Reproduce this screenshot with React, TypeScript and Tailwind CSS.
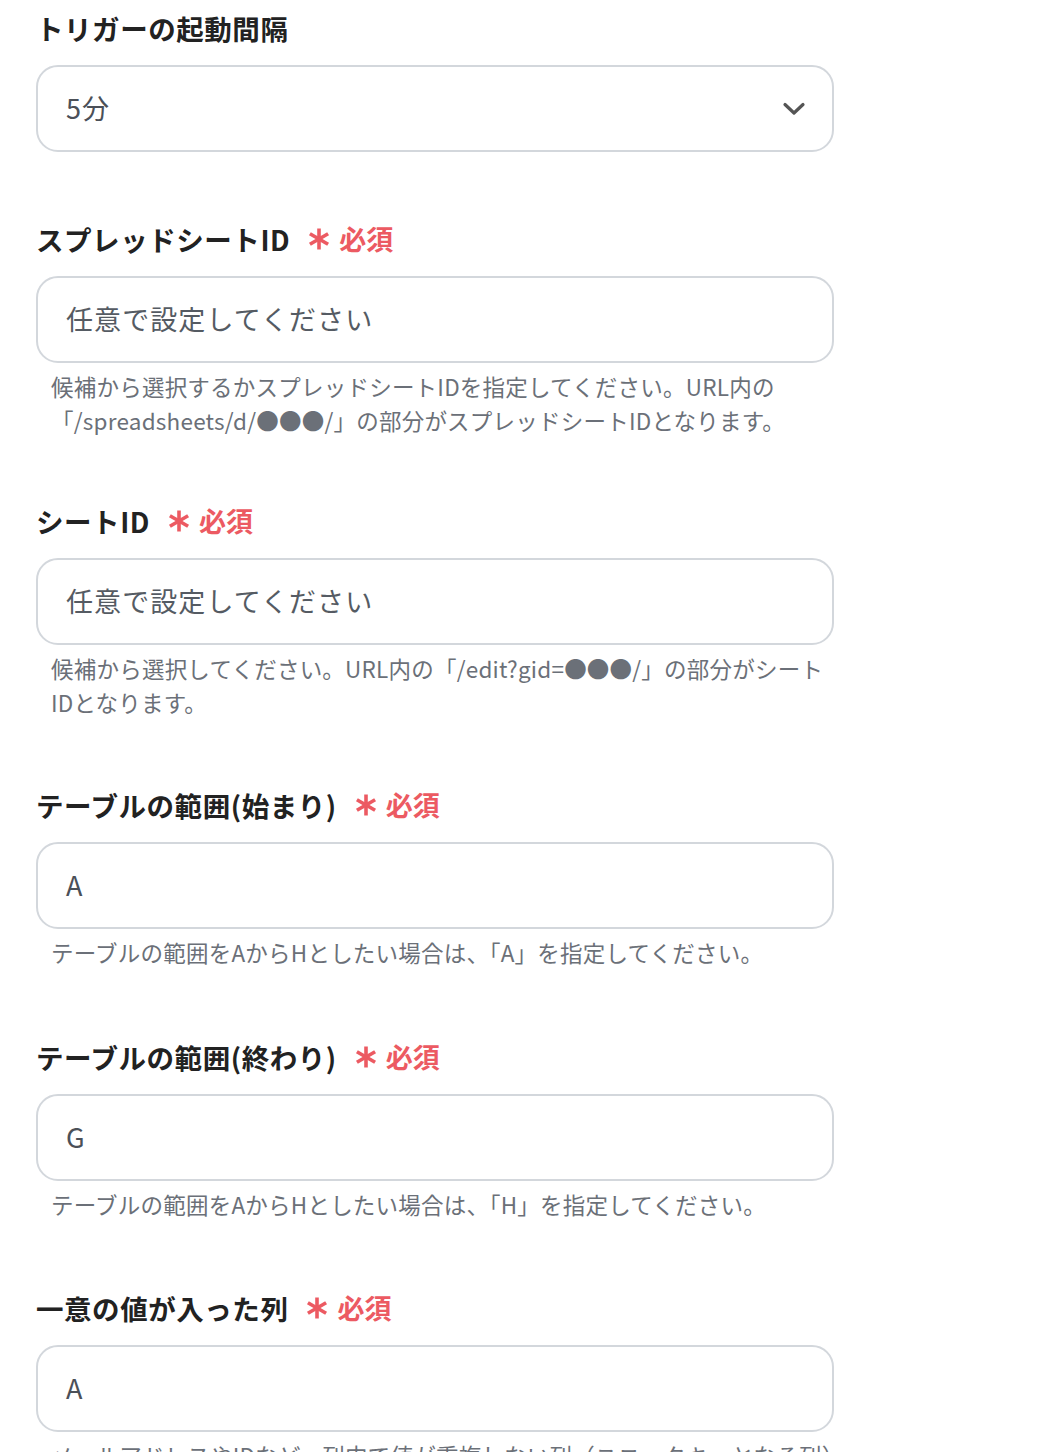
import { ReactNode } from "react";

type FieldProps = {
  label: string;
  required?: boolean;
  value: string;
  placeholder?: boolean;
  select?: boolean;
  help?: ReactNode;
};

function Asterisk() {
  return (
    <svg width="24" height="24" viewBox="0 0 24 24" fill="none" className="mr-[8px]">
      <g stroke="#ec5a62" strokeWidth="3.6" strokeLinecap="butt">
        <path d="M12 1.5v21" />
        <path d="M2.9 6.75 21.1 17.25" />
        <path d="M2.9 17.25 21.1 6.75" />
      </g>
    </svg>
  );
}

function Field({ label, required, value, placeholder, select, help }: FieldProps) {
  return (
    <div>
      <div className="flex h-[40px] items-center">
        <span className="text-[27.5px] font-bold leading-[40px] tracking-[0.02em] text-[#222]">{label}</span>
        {required && (
          <span className="ml-[17px] flex items-center text-[27px] font-bold leading-[40px] text-[#ec5a62]">
            <Asterisk />
            必須
          </span>
        )}
      </div>
      <div className="mt-[17px] flex h-[87px] w-[798px] items-center justify-between rounded-[22px] border-2 border-[#d3d7dc] bg-white pl-[28px] pr-[28px]">
        <span className={`text-[27px] tracking-[0.04em] ${placeholder ? "text-[#555b63]" : "text-[#4b5058]"}`}>{value}</span>
        {select && (
          <svg width="24" height="24" viewBox="0 0 24 24" fill="none" className="-mr-[2px]">
            <path d="M3 7.5 12 16 21 7.5" stroke="#555" strokeWidth="3.2" strokeLinecap="round" strokeLinejoin="round" />
          </svg>
        )}
      </div>
      {help && (
        <p className="mt-[6px] w-[798px] pl-[15px] text-[22.5px] leading-[34px] tracking-[0.01em] text-[#6b7078]">{help}</p>
      )}
    </div>
  );
}

export default function App() {
  return (
    <div
      className="h-[1452px] overflow-hidden bg-white pl-[36px] pt-[8px]"
      style={{ fontFamily: '"Noto Sans CJK JP", "Noto Sans", sans-serif' }}
    >
      <div className="flex flex-col">
        <div className="mb-[67px]">
          <Field label="トリガーの起動間隔" value="5分" select />
        </div>
        <div className="mb-[64px]">
          <Field
            label="スプレッドシートID"
            required
            value="任意で設定してください"
            placeholder
            help={
              <>
                候補から選択するかスプレッドシートIDを指定してください。URL内の
                <br />
                「/spreadsheets/d/●●●/」の部分がスプレッドシートIDとなります。
              </>
            }
          />
        </div>
        <div className="mb-[66px]">
          <Field
            label="シートID"
            required
            value="任意で設定してください"
            placeholder
            help={
              <>
                候補から選択してください。URL内の「/edit?gid=●●●/」の部分がシート
                <br />
                IDとなります。
              </>
            }
          />
        </div>
        <div className="mb-[68px]">
          <Field
            label="テーブルの範囲(始まり)"
            required
            value="A"
            help="テーブルの範囲をAからHとしたい場合は、「A」を指定してください。"
          />
        </div>
        <div className="mb-[67px]">
          <Field
            label="テーブルの範囲(終わり)"
            required
            value="G"
            help="テーブルの範囲をAからHとしたい場合は、「H」を指定してください。"
          />
        </div>
        <div>
          <Field
            label="一意の値が入った列"
            required
            value="A"
            help="メールアドレスやIDなど、列内で値が重複しない列（ユニークキーとなる列）を指定してください。"
          />
        </div>
      </div>
    </div>
  );
}
